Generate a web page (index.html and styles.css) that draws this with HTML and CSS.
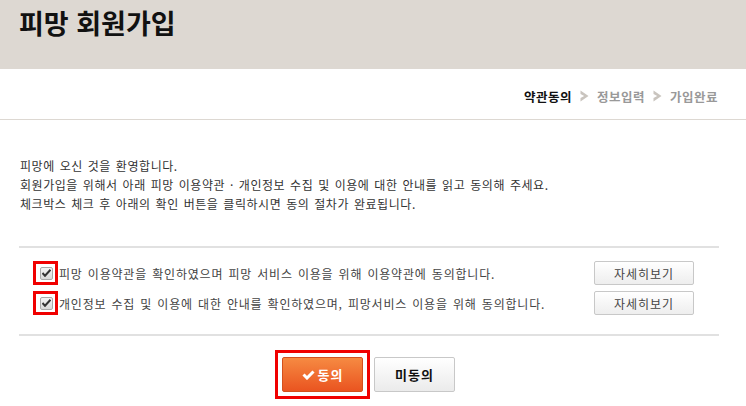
FILE: index.html
```html
<!DOCTYPE html>
<html lang="ko">
<head>
    <meta charset="UTF-8">
    <title>피망 회원가입</title>
    <link rel="stylesheet" href="styles.css">
</head>
<body>
    <div class="header">
        <h1>피망 회원가입</h1>
    </div>

    <!-- 단계 표시 -->
    <div class="steps">
        <span class="step on">약관동의</span>
        <svg class="arrow" width="9" height="12" viewBox="0 0 9 12"><path d="M0.5 0.5 L8.5 6 L0.5 11.5 L0.5 8 L4.2 6 L0.5 4 Z" fill="#c9c4be"/></svg>
        <span class="step">정보입력</span>
        <svg class="arrow" width="9" height="12" viewBox="0 0 9 12"><path d="M0.5 0.5 L8.5 6 L0.5 11.5 L0.5 8 L4.2 6 L0.5 4 Z" fill="#c9c4be"/></svg>
        <span class="step">가입완료</span>
    </div>

    <div class="container">
        <div class="intro">
            <p>피망에 오신 것을 환영합니다.</p>
            <p>회원가입을 위해서 아래 피망 이용약관 · 개인정보 수집 및 이용에 대한 안내를 읽고 동의해 주세요.</p>
            <p>체크박스 체크 후 아래의 확인 버튼을 클릭하시면 동의 절차가 완료됩니다.</p>
        </div>

        <div class="agree-list">
            <div class="agree-row">
                <span class="mark">
                    <span class="chk"><svg width="9" height="8" viewBox="0 0 9 8"><path d="M0.5 4 L3 6.8 L8.5 0.8" stroke="#333" stroke-width="2" fill="none"/></svg></span>
                </span>
                <span class="label">피망 이용약관을 확인하였으며 피망 서비스 이용을 위해 이용약관에 동의합니다.</span>
                <button class="btn-view">자세히보기</button>
            </div>
            <div class="agree-row">
                <span class="mark">
                    <span class="chk"><svg width="9" height="8" viewBox="0 0 9 8"><path d="M0.5 4 L3 6.8 L8.5 0.8" stroke="#333" stroke-width="2" fill="none"/></svg></span>
                </span>
                <span class="label">개인정보 수집 및 이용에 대한 안내를 확인하였으며, 피망서비스 이용을 위해 동의합니다.</span>
                <button class="btn-view">자세히보기</button>
            </div>
        </div>

        <div class="buttons">
            <span class="mark-btn">
                <button class="btn-ok"><svg width="13" height="10" viewBox="0 0 13 10"><path d="M1.5 4.5 L5 8 L11.5 1.5" stroke="#fff" stroke-width="3" fill="none"/></svg>동의</button>
            </span>
            <button class="btn-no">미동의</button>
        </div>
    </div>
</body>
</html>
```

FILE: styles.css
```css
/* 회원가입 약관동의 */
body {
    margin: 0;
    font-family: "Noto Sans CJK KR", "Liberation Sans", sans-serif;
    background-color: #fff;
    color: #333;
}
.header {
    height: 69px;
    background-color: #ddd8d2;
    box-sizing: border-box;
    padding: 4px 0 0 19px;
}
.header h1 {
    margin: 0;
    font-size: 27px;
    line-height: 38px;
    font-weight: bold;
    color: #111;
}
.steps {
    height: 51px;
    border-bottom: 1px solid #ddd8d2;
    box-sizing: border-box;
    padding: 4px 28px 0 0;
    display: flex;
    justify-content: flex-end;
    align-items: center;
    gap: 8px;
    font-size: 12.5px;
    font-weight: bold;
    letter-spacing: 0.5px;
}
.step {
    color: #999;
}
.step.on {
    color: #111;
}
.container {
    width: 700px;
    margin-left: 19px;
}
.intro {
    padding: 36px 0 33px 1px;
}
.intro p {
    margin: 0;
    font-size: 12px;
    line-height: 19px;
    color: #333;
    letter-spacing: 0.55px;
    word-spacing: 1px;
}
.agree-list {
    border-top: 2px solid #e1e1e1;
    border-bottom: 2px solid #e1e1e1;
    padding: 13px 25px 19px 14px;
    display: flex;
    flex-direction: column;
    gap: 6px;
}
.agree-row {
    display: flex;
    align-items: center;
    height: 24px;
}
.mark {
    width: 25px;
    height: 24px;
    border: 3px solid #f00000;
    box-sizing: border-box;
    display: flex;
    align-items: center;
    justify-content: center;
    padding-left: 2px;
}
.chk {
    width: 11px;
    height: 11px;
    border: 1px solid #a9a9a9;
    border-radius: 2px;
    background: linear-gradient(#f4f4f4, #d8d8d8);
    display: flex;
    align-items: center;
    justify-content: center;
}
.label {
    flex: 1;
    font-size: 12px;
    color: #444;
    padding-left: 1px;
    letter-spacing: 0.8px;
    word-spacing: 1px;
}
.btn-view {
    width: 100px;
    height: 24px;
    border: 1px solid #c8c8c8;
    border-radius: 2px;
    background: linear-gradient(#ffffff, #eeeeee);
    font-family: "Noto Sans CJK KR", sans-serif;
    font-size: 12px;
    letter-spacing: 1px;
    color: #444;
    padding: 0;
    cursor: pointer;
}
.buttons {
    display: flex;
    justify-content: center;
    align-items: center;
    gap: 4px;
    padding: 14px 8px 0 0;
}
.mark-btn {
    border: 3px solid #f00000;
    padding: 4px;
    display: flex;
}
.btn-ok, .btn-no {
    width: 81px;
    height: 35px;
    border-radius: 2px;
    font-family: "Noto Sans CJK KR", sans-serif;
    font-size: 13px;
    font-weight: bold;
    letter-spacing: 1px;
    padding: 0;
    cursor: pointer;
    display: flex;
    align-items: center;
    justify-content: center;
}
.btn-ok {
    border: 1px solid #d4501c;
    background: linear-gradient(#f68a42, #ea5420);
    color: #fff;
    gap: 3px;
}
.btn-no {
    border: 1px solid #c8c8c8;
    background: linear-gradient(#ffffff, #ebebeb);
    color: #111;
}
```
